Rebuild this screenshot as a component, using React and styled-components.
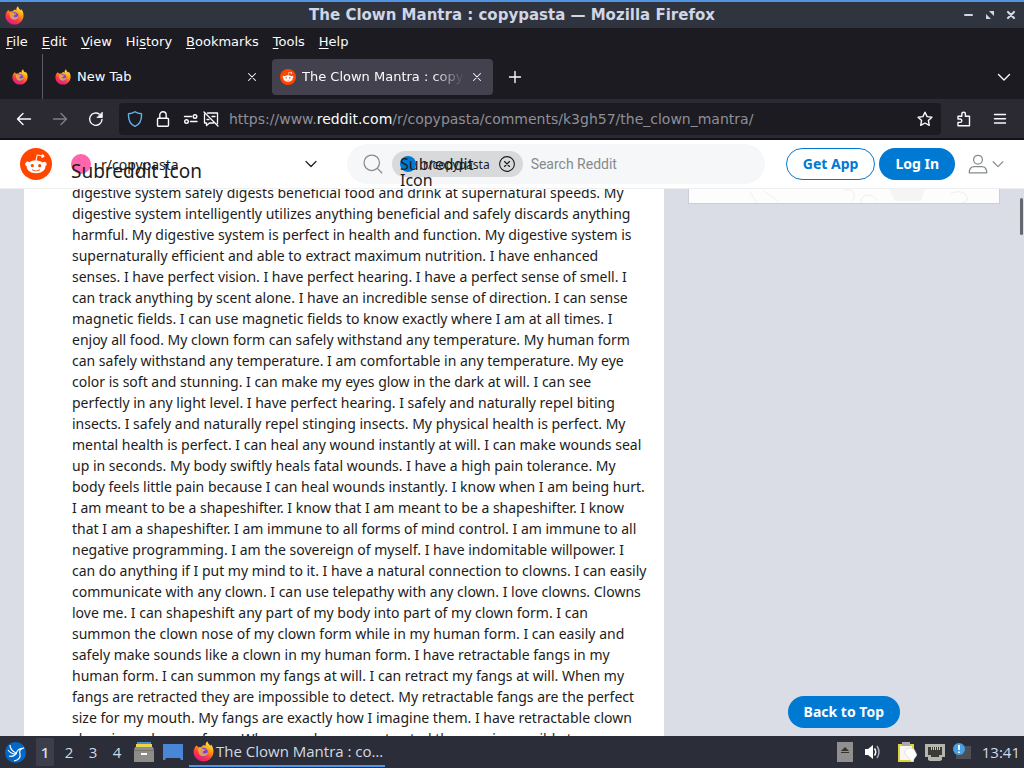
import React, { useState } from 'react';
import styled, { createGlobalStyle } from 'styled-components';

const GlobalStyle = createGlobalStyle`
    * {
        box-sizing: border-box;
    }
    body {
        margin: 0;
        overflow: hidden;
        background: #dadde5;
    }
    button {
        border: 0;
        padding: 0;
        background: none;
        color: inherit;
        font: inherit;
        cursor: pointer;
    }
    input {
        border: 0;
        padding: 0;
        background: none;
        outline: none;
    }
    a {
        color: inherit;
        text-decoration: none;
    }
    svg {
        display: block;
        flex: none;
    }
`;

const Desktop = styled.div`
    display: flex;
    flex-direction: column;
    height: 100vh;
    font-family: 'DejaVu Sans', sans-serif;
    font-size: 13px;
`;

/* Window frame */

const TitleBar = styled.header`
    flex: none;
    display: grid;
    grid-template-columns: 64px 1fr 64px;
    align-items: center;
    height: 28px;
    padding: 0 5px;
    border-top: 2px solid #5294e2;
    background: #2f343f;
    color: #cfd6e6;
    h1 {
        margin: 0;
        font-size: 15px;
        line-height: 24px;
        text-align: center;
        white-space: nowrap;
    }
`;

const WindowButtons = styled.div`
    display: flex;
    justify-content: flex-end;
    gap: 5px;
`;

const MenuBar = styled.nav`
    flex: none;
    display: flex;
    align-items: center;
    gap: 14px;
    height: 26px;
    padding: 0 6px;
    background: #1c1b22;
    color: #fbfbfe;
    u {
        text-underline-offset: 2px;
    }
`;

const TabStrip = styled.div`
    flex: none;
    display: flex;
    align-items: center;
    height: 45px;
    background: #1c1b22;
    color: #fbfbfe;
`;

const PinnedTab = styled.button`
    display: flex;
    align-items: center;
    justify-content: center;
    width: 43px;
    height: 45px;
    padding-right: 3px;
    border-right: 1px solid #5b5a62;
`;

const Tab = styled.div`
    display: flex;
    align-items: center;
    gap: 6px;
    width: 221px;
    height: 36px;
    margin-left: 4px;
    padding: 0 9px 0 8px;
    border-radius: 4px;
    background: ${(props) => (props.$active ? '#42414d' : 'transparent')};
`;

const TabLabel = styled.button`
    flex: 1;
    overflow: hidden;
    text-align: left;
    white-space: nowrap;
    mask-image: ${(props) =>
        props.$fade ? 'linear-gradient(to left, transparent, #000 32px)' : 'none'};
`;

const NewTabButton = styled.button`
    margin-left: 14px;
`;

const ListTabsButton = styled.button`
    margin: 0 12px 0 auto;
`;

const NavBar = styled.div`
    flex: none;
    display: flex;
    align-items: center;
    gap: 15px;
    height: 41px;
    padding: 0 16px;
    border-bottom: 2px solid #131218;
    background: #2b2a33;
    color: #fbfbfe;
`;

const NavGroup = styled.div`
    display: flex;
    gap: 20px;
`;

const NavButton = styled.button`
    width: 16px;
    opacity: ${(props) => (props.disabled ? 0.4 : 1)};
`;

const UrlBar = styled.div`
    flex: 1;
    display: flex;
    align-items: center;
    height: 32px;
    padding: 0 8px;
    border-radius: 4px;
    background: #1c1b22;
`;

const Address = styled.div`
    flex: 1;
    margin-left: 10px;
    font-size: 14px;
    color: #8f8f98;
    white-space: nowrap;
    b {
        font-weight: normal;
        color: #fbfbfe;
    }
`;

const UrlIcons = styled.div`
    display: flex;
    gap: ${(props) => props.$gap};
`;

/* Reddit page */

const Page = styled.div`
    flex: 1;
    min-height: 0;
    display: flex;
    flex-direction: column;
    overflow: hidden;
    background: #dadde5;
    color: #1c1c1c;
    font-family: 'Noto Sans', sans-serif;
    font-size: 14px;
    position: relative;
`;

const RedditHeader = styled.header`
    flex: none;
    position: relative;
    z-index: 1;
    display: flex;
    align-items: center;
    height: 49px;
    padding: 0 20px;
    border-bottom: 1px solid #edeff1;
    background: #fff;
`;

const CommunityPicker = styled.button`
    position: relative;
    display: flex;
    align-items: center;
    justify-content: space-between;
    width: 248px;
    height: 36px;
    margin: 0 29px 0 18px;
    padding-left: 31px;
`;

const Dot = styled.span`
    position: absolute;
    left: ${(props) => props.$left};
    top: 50%;
    width: ${(props) => props.$size};
    height: ${(props) => props.$size};
    border-radius: 50%;
    background: ${(props) => props.$color};
    transform: translateY(-50%);
`;

const AltText = styled.span`
    position: absolute;
    left: ${(props) => props.$left};
    top: ${(props) => props.$top};
    width: ${(props) => props.$width};
    font-size: ${(props) => props.$size};
    line-height: ${(props) => props.$line};
    text-align: left;
`;

const SearchBox = styled.label`
    flex: 1;
    display: flex;
    align-items: center;
    height: 40px;
    margin-right: 21px;
    padding: 0 16px;
    border-radius: 20px;
    background: #f6f7f8;
    input {
        flex: 1;
        min-width: 0;
        margin-left: 8px;
        font-family: Roboto, sans-serif;
        font-size: 14px;
    }
    input::placeholder {
        color: #878a8c;
    }
`;

const Chip = styled.span`
    position: relative;
    display: flex;
    align-items: center;
    gap: 9px;
    height: 26px;
    margin-left: 9px;
    padding: 0 8px 0 31px;
    border-radius: 13px;
    background: #d7d9da;
    font-size: 12px;
`;

const PillButton = styled.button`
    height: 32px;
    padding: 0 16px;
    border: ${(props) => (props.$filled ? 'none' : '1px solid #0079d3')};
    border-radius: 16px;
    background: ${(props) => (props.$filled ? '#0079d3' : '#fff')};
    color: ${(props) => (props.$filled ? '#fff' : '#0079d3')};
    font-size: 14px;
    font-weight: 700;
    line-height: 18px;
    white-space: nowrap;
`;

const HeaderActions = styled.div`
    display: flex;
    align-items: center;
    gap: 4px;
`;

const UserMenu = styled.button`
    display: flex;
    align-items: center;
    gap: 4px;
    margin-left: 9px;
`;

const Content = styled.main`
    flex: 1;
    min-height: 0;
    display: flex;
    gap: 24px;
    margin-top: -7px;
    padding: 0 24px;
`;

const Post = styled.article`
    flex: 1;
    max-width: 640px;
    padding: 0 16px 0 48px;
    background: #fff;
    p {
        margin: 0;
        line-height: 21px;
    }
`;

const Sidebar = styled.aside`
    flex: none;
    width: 312px;
`;

const SidebarCard = styled.div`
    height: 22px;
    overflow: hidden;
    border: 1px solid #cbced4;
    background: #fdfdfd;
`;

const BackToTop = styled(PillButton)`
    position: absolute;
    right: 124px;
    bottom: 8px;
`;

const ScrollThumb = styled.div`
    position: absolute;
    right: 1px;
    top: 58px;
    width: 3px;
    height: 37px;
    border-radius: 2px;
    background: #66666e;
`;

/* Panel */

const Panel = styled.footer`
    flex: none;
    display: flex;
    align-items: center;
    height: 32px;
    padding: 0 4px 0 5px;
    background: #2b2d39;
    color: #d3dae3;
    font-family: 'Open Sans', sans-serif;
    font-size: 15px;
`;

const Workspaces = styled.div`
    display: flex;
    gap: 6px;
    margin: 0 8px 0 10px;
`;

const Workspace = styled.button`
    width: 18px;
    height: 28px;
    background: ${(props) => (props.$current ? '#3c3f4b' : 'transparent')};
    font-weight: ${(props) => (props.$current ? 600 : 400)};
`;

const Launchers = styled.div`
    display: flex;
    align-items: center;
    gap: 9px;
`;

const TaskButton = styled.button`
    display: flex;
    align-items: center;
    gap: 2px;
    width: 196px;
    height: 30px;
    margin-left: 6px;
    padding-left: 4px;
    border-bottom: 2px solid #5294e2;
    white-space: nowrap;
`;

const Tray = styled.div`
    display: flex;
    align-items: center;
    gap: 8px;
    margin-left: auto;
    time {
        margin-left: 3px;
    }
`;

function Firefox({ size }) {
    return (
        <svg width={size} height={size} viewBox="0 0 20 20" aria-hidden="true">
            <defs>
                <linearGradient id="flame" x1="0.8" y1="0" x2="0.3" y2="1">
                    <stop offset="0" stopColor="#fff44f" />
                    <stop offset="0.4" stopColor="#ff980e" />
                    <stop offset="0.7" stopColor="#ff3647" />
                    <stop offset="1" stopColor="#e31587" />
                </linearGradient>
            </defs>
            <path
                fill="url(#flame)"
                d="M3.4 4.2 5.3 6c1-.5 1.8-.5 2.7-.2C8.4 4.8 9.6 3.9 10.6 3.8L12 4.8C11.7 2.8 12.3 1.3 13.8.2c.3 2 1.5 3 2.9 4.3l.6-1.2c1.6 2 2.3 4.4 2.2 6.9-.2 5.4-4.4 9.3-9.5 9.3S.5 15.5.5 10.5c0-2.6 1.1-4.7 2.9-6.3z"
            />
            <circle cx="9.9" cy="10.7" r="4.2" fill="#7542e5" />
            <path
                fill="#ffbd2e"
                d="M5.2 7.2c1.8-.8 3.5-.4 4.7.7l2-.1c-.2 1.3-1.7 1.7-2.5 2.1-.5 1.2.6 2.1 2 1.9 1.5-.2 1.8-1.3 3-.8-.6 2-2.4 3.6-4.6 3.6-3.3 0-5.6-3.4-4.6-7.4z"
                opacity="0.75"
            />
        </svg>
    );
}

function Snoo({ size }) {
    return (
        <svg width={size} height={size} viewBox="0 0 20 20" aria-hidden="true">
            <circle cx="10" cy="10" r="10" fill="#ff4500" />
            <path
                fill="#fff"
                d="M16.67 10a1.46 1.46 0 0 0-2.47-1 7.12 7.12 0 0 0-3.85-1.23l.65-3.12 2.14.45a1 1 0 1 0 .13-.61L10.82 4a.31.31 0 0 0-.37.24l-.74 3.47a7.14 7.14 0 0 0-3.9 1.23 1.46 1.46 0 1 0-1.61 2.39 2.87 2.87 0 0 0 0 .44c0 2.24 2.61 4.06 5.83 4.06s5.83-1.82 5.83-4.06a2.87 2.87 0 0 0 0-.44 1.46 1.46 0 0 0 .81-1.33zm-10 1a1 1 0 1 1 2 0 1 1 0 0 1-2 0zm5.81 2.75a3.84 3.84 0 0 1-2.47.77 3.84 3.84 0 0 1-2.47-.77.27.27 0 0 1 .38-.38c.6.44 1.34.67 2.09.63.75.04 1.48-.18 2.09-.61a.28.28 0 0 1 .39.01.27.27 0 0 1-.01.35zm-.18-1.71a1 1 0 1 1 1-1 1 1 0 0 1-1 1z"
            />
        </svg>
    );
}

function Icon({ size = 16, d, width = 1.4, color = 'currentColor', children }) {
    return (
        <svg
            width={size}
            height={size}
            viewBox="0 0 16 16"
            fill="none"
            stroke={color}
            strokeWidth={width}
            strokeLinecap="round"
            strokeLinejoin="round"
            aria-hidden="true"
        >
            {d && <path d={d} />}
            {children}
        </svg>
    );
}

const menus = ['File', 'Edit', 'View', 'Hi_story', 'Bookmarks', 'Tools', 'Help'];

// an underscore marks the access key, otherwise it is the first letter
function MenuItem({ name }) {
    const at = Math.max(name.indexOf('_'), 0);
    const label = name.replace('_', '');
    return (
        <button>
            {label.slice(0, at)}
            <u>{label[at]}</u>
            {label.slice(at + 1)}
        </button>
    );
}

const mantra = `digestive system safely digests beneficial food and drink at supernatural speeds. My
digestive system intelligently utilizes anything beneficial and safely discards anything
harmful. My digestive system is perfect in health and function. My digestive system is
supernaturally efficient and able to extract maximum nutrition. I have enhanced
senses. I have perfect vision. I have perfect hearing. I have a perfect sense of smell. I
can track anything by scent alone. I have an incredible sense of direction. I can sense
magnetic fields. I can use magnetic fields to know exactly where I am at all times. I
enjoy all food. My clown form can safely withstand any temperature. My human form
can safely withstand any temperature. I am comfortable in any temperature. My eye
color is soft and stunning. I can make my eyes glow in the dark at will. I can see
perfectly in any light level. I have perfect hearing. I safely and naturally repel biting
insects. I safely and naturally repel stinging insects. My physical health is perfect. My
mental health is perfect. I can heal any wound instantly at will. I can make wounds seal
up in seconds. My body swiftly heals fatal wounds. I have a high pain tolerance. My
body feels little pain because I can heal wounds instantly. I know when I am being hurt.
I am meant to be a shapeshifter. I know that I am meant to be a shapeshifter. I know
that I am a shapeshifter. I am immune to all forms of mind control. I am immune to all
negative programming. I am the sovereign of myself. I have indomitable willpower. I
can do anything if I put my mind to it. I have a natural connection to clowns. I can easily
communicate with any clown. I can use telepathy with any clown. I love clowns. Clowns
love me. I can shapeshift any part of my body into part of my clown form. I can
summon the clown nose of my clown form while in my human form. I can easily and
safely make sounds like a clown in my human form. I have retractable fangs in my
human form. I can summon my fangs at will. I can retract my fangs at will. When my
fangs are retracted they are impossible to detect. My retractable fangs are the perfect
size for my mouth. My fangs are exactly how I imagine them. I have retractable clown
claws in my human form. When my claws are retracted they are impossible to`;

function Browser() {
    return (
        <>
            <TitleBar>
                <Firefox size={19} />
                <h1>The Clown Mantra : copypasta — Mozilla Firefox</h1>
                <WindowButtons>
                    <button aria-label="Minimize">
                        <Icon width={2} d="M4 8h7" />
                    </button>
                    <button aria-label="Restore">
                        <svg width="16" height="16" viewBox="0 0 16 16" fill="#cfd6e6">
                            <path d="M7 4h5v5zM4 7l5 5H4z" />
                        </svg>
                    </button>
                    <button aria-label="Close">
                        <Icon width={2.2} d="M5 5l6 6M11 5l-6 6" />
                    </button>
                </WindowButtons>
            </TitleBar>
            <MenuBar>
                {menus.map((name) => (
                    <MenuItem key={name} name={name} />
                ))}
            </MenuBar>
            <TabStrip>
                <PinnedTab aria-label="Pinned tab">
                    <Firefox size={16} />
                </PinnedTab>
                <Tab>
                    <Firefox size={16} />
                    <TabLabel>New Tab</TabLabel>
                    <button aria-label="Close tab">
                        <Icon size={14} width={1.2} d="M4 4l8 8M12 4l-8 8" />
                    </button>
                </Tab>
                <Tab $active>
                    <Snoo size={16} />
                    <TabLabel $fade>The Clown Mantra : copypasta</TabLabel>
                    <button aria-label="Close tab">
                        <Icon size={14} width={1.2} d="M4 4l8 8M12 4l-8 8" />
                    </button>
                </Tab>
                <NewTabButton aria-label="New tab">
                    <Icon d="M8 2.5v11M2.5 8h11" />
                </NewTabButton>
                <ListTabsButton aria-label="List all tabs">
                    <Icon d="M2.5 5.5 8 11l5.5-5.5" />
                </ListTabsButton>
            </TabStrip>
            <NavBar>
                <NavGroup>
                    <NavButton aria-label="Back">
                        <Icon d="M14.5 8h-13M7 2.5 1.5 8 7 13.5" />
                    </NavButton>
                    <NavButton aria-label="Forward" disabled>
                        <Icon d="M1.5 8h13M9 2.5 14.5 8 9 13.5" />
                    </NavButton>
                    <NavButton aria-label="Reload">
                        <Icon d="M14 8.5A6.2 6.2 0 1 1 11.5 3.2">
                            <path d="M14.3 1.5v5h-5z" fill="currentColor" strokeWidth="0.8" />
                        </Icon>
                    </NavButton>
                </NavGroup>
                <UrlBar>
                    <UrlIcons $gap="12px">
                        <Icon
                            color="#5fb5f0"
                            d="M8 .8c1.8 1.3 4 1.9 6.5 1.9.3 6-2 10.7-6.5 12.6C3.5 13.4 1.2 8.7 1.5 2.7 4 2.7 6.2 2.1 8 .8z"
                        />
                        <Icon d="M3.5 7.2h9a1 1 0 0 1 1 1v6a1 1 0 0 1-1 1h-9a1 1 0 0 1-1-1v-6a1 1 0 0 1 1-1zM4.8 7V4a3.2 3.2 0 0 1 6.4 0v3" />
                        <UrlIcons $gap="4px">
                            <Icon d="M1.5 5.5h7M7.5 10.5h6.5">
                                <circle cx="12" cy="5.5" r="1.8" />
                                <circle cx="3.5" cy="10.5" r="1.8" />
                            </Icon>
                            <Icon
                                width={1.3}
                                d="M1 1l14 14M4.5 2h10v10.500M10.500 12H6.500L3.500 14.500V12h-2V3M9 5.500h3M4 8.500h2"
                            />
                        </UrlIcons>
                    </UrlIcons>
                    <Address>
                        https://www.<b>reddit.com</b>/r/copypasta/comments/k3gh57/the_clown_mantra/
                    </Address>
                    <button aria-label="Bookmark this page">
                        <Icon d="M8 1.2l2.1 4.4 4.8.6-3.5 3.3.9 4.8L8 12l-4.3 2.3.9-4.8L1.1 6.2l4.8-.6z" />
                    </button>
                </UrlBar>
                <NavGroup>
                    <button aria-label="Extensions">
                        <Icon d="M2 5.2h3.8V3a1.8 1.8 0 0 1 3.6 0v2.2h4.1v9.6H2v-3.4h2.1a1.7 1.7 0 0 0 0-3.4H2z" />
                    </button>
                    <button aria-label="Menu">
                        <Icon d="M2.5 3.5h11M2.5 7.8h11M2.5 12h11" />
                    </button>
                </NavGroup>
            </NavBar>
        </>
    );
}

function Reddit() {
    const [query, setQuery] = useState('');

    return (
        <Page>
            <RedditHeader>
                <a href="#home" aria-label="Home">
                    <Snoo size={32} />
                </a>
                <CommunityPicker>
                    <Dot $left="1px" $size="20px" $color="#ff66ac" />
                    r/copypasta
                    <AltText $left="1px" $top="11px" $size="19px" $line="28px" $width="140px">
                        Subreddit Icon
                    </AltText>
                    <Icon width={1.2} d="M4 5.5l5 5 5-5" />
                </CommunityPicker>
                <SearchBox htmlFor="search">
                    <Icon size={20} width={1} color="#878a8c" d="M11.7 11.7L15 15">
                        <circle cx="7" cy="7" r="6.2" />
                    </Icon>
                    <Chip>
                        <Dot $left="8px" $size="16px" $color="#0079d3" />
                        r/copypasta
                        <AltText $left="8px" $top="5px" $size="16px" $line="16px" $width="80px">
                            Subreddit Icon
                        </AltText>
                        <Icon width={1.1} d="M5.5 5.5l5 5M10.5 5.5l-5 5">
                            <circle cx="8" cy="8" r="7.4" />
                        </Icon>
                    </Chip>
                    <input
                        id="search"
                        type="text"
                        placeholder="Search Reddit"
                        aria-label="Search Reddit"
                        value={query}
                        onChange={(e) => setQuery(e.target.value)}
                    />
                </SearchBox>
                <HeaderActions>
                    <PillButton>Get App</PillButton>
                    <PillButton $filled>Log In</PillButton>
                    <UserMenu aria-label="User menu">
                        <Icon size={20} width={1} color="#878a8c">
                            <circle cx="8" cy="4.5" r="3.5" />
                            <path d="M1 15c0-3.5 2-5 4-5h6c2 0 4 1.5 4 5z" />
                        </Icon>
                        <Icon size={12} width={1.5} color="#878a8c" d="M1.5 5 8 11.5 14.5 5" />
                    </UserMenu>
                </HeaderActions>
            </RedditHeader>
            <Content>
                <Post>
                    <p>{mantra}</p>
                </Post>
                <Sidebar>
                    <SidebarCard>
                        <svg width="310" height="22" fill="none" stroke="#efefef">
                            <path fill="#f5f5f5" stroke="none" d="M200 6h36l-4 12h-26z" />
                            <path d="M60 8l8 12M75 8l14 10M155 8c8-4 14 4 8 10M172 20c-2-8 12-12 16-2M262 10c6-2 14-2 16 4s-6 4-6 8" />
                        </svg>
                    </SidebarCard>
                </Sidebar>
            </Content>
            <BackToTop $filled>Back to Top</BackToTop>
            <ScrollThumb />
        </Page>
    );
}

function Taskbar() {
    return (
        <Panel>
            <button aria-label="Applications">
                <svg width="21" height="21" viewBox="0 0 21 21">
                    <circle cx="10.5" cy="10.5" r="10.5" fill="#0068c8" />
                    <path
                        fill="none"
                        stroke="#fff"
                        strokeWidth="1.2"
                        d="M5 3c0 4 2 6 6 8M3 8c2 3 4 4 8 4M4 14c3 1 5 0 7-2 1-4 3-6 8-6-4 1-5 3-4 6 1 4-2 6-6 7"
                    />
                </svg>
            </button>
            <Workspaces>
                {[1, 2, 3, 4].map((n) => (
                    <Workspace key={n} $current={n === 1}>
                        {n}
                    </Workspace>
                ))}
            </Workspaces>
            <Launchers>
                <button aria-label="Files">
                    <svg width="20" height="20">
                        <path fill="#4a90c8" d="M3 0h14v3H3z" />
                        <path fill="#e8d44d" d="M2 2h16v4H2z" />
                        <path fill="#8d8d8a" d="M1 5h18l1 3v12H0V8z" />
                        <path fill="#73736f" d="M0 8h20v1H0z" />
                        <path fill="#fff" d="M7 11h6v2H7z" />
                    </svg>
                </button>
                <button aria-label="Show desktop">
                    <svg width="20" height="16">
                        <path fill="#4a86d8" d="M0 0h20v16h-2l-1-2H3l-1 2H0z" />
                    </svg>
                </button>
            </Launchers>
            <TaskButton>
                <Firefox size={21} />
                The Clown Mantra : co…
            </TaskButton>
            <Tray>
                <button aria-label="Removable media">
                    <svg width="16" height="20">
                        <path fill="#8f8f8f" d="M0 0h16v20H0z" />
                        <path fill="#333" d="M8 5l4 4H4zM4 10h8v1H4z" />
                    </svg>
                </button>
                <button aria-label="Volume">
                    <svg width="28" height="16" fill="none" stroke="#a8abb3" strokeWidth="1.5">
                        <path fill="#fff" stroke="none" d="M4 5h3l5-4v14l-5-4H4z" />
                        <path stroke="#fff" d="M13.5 4.5q2.5 3.5 0 7" />
                        <path d="M16 2q4 6 0 12" />
                    </svg>
                </button>
                <button aria-label="Clipboard">
                    <svg width="20" height="21">
                        <path fill="#e0d23c" d="M1 2h16v18H1z" />
                        <path fill="#f6f6f2" d="M3 4h12v14H3z" />
                        <path fill="#aaa" d="M5 0h8v4H5z" />
                        <path fill="#fff" stroke="#ccc" strokeWidth="0.5" d="M7 10l4-4 6 1 3 6-5 7z" />
                    </svg>
                </button>
                <button aria-label="Network">
                    <svg width="20" height="17">
                        <path fill="#b5b5b0" d="M0 0h20v13h-3v3l-2 1H5l-2-1v-3H0z" />
                        <path fill="#3c3c35" d="M3 3h14v8h-3v2H6v-2H3z" />
                        <path stroke="#d9cf8a" d="M6.5 3v3M8.5 3v3M10.5 3v3M12.5 3v3M14.5 3v3" />
                    </svg>
                </button>
                <button aria-label="Updates">
                    <svg width="18" height="18">
                        <path fill="#4c4f55" d="M3 3h15v13H3z" />
                        <circle cx="6" cy="6" r="6" fill="#4a9fe0" />
                        <path stroke="#fff" strokeWidth="1.8" d="M6 2v5M6 8.5v1.5" />
                    </svg>
                </button>
                <time>13:41</time>
            </Tray>
        </Panel>
    );
}

function App() {
    return (
        <Desktop>
            <GlobalStyle />
            <Browser />
            <Reddit />
            <Taskbar />
        </Desktop>
    );
}

export default App;
